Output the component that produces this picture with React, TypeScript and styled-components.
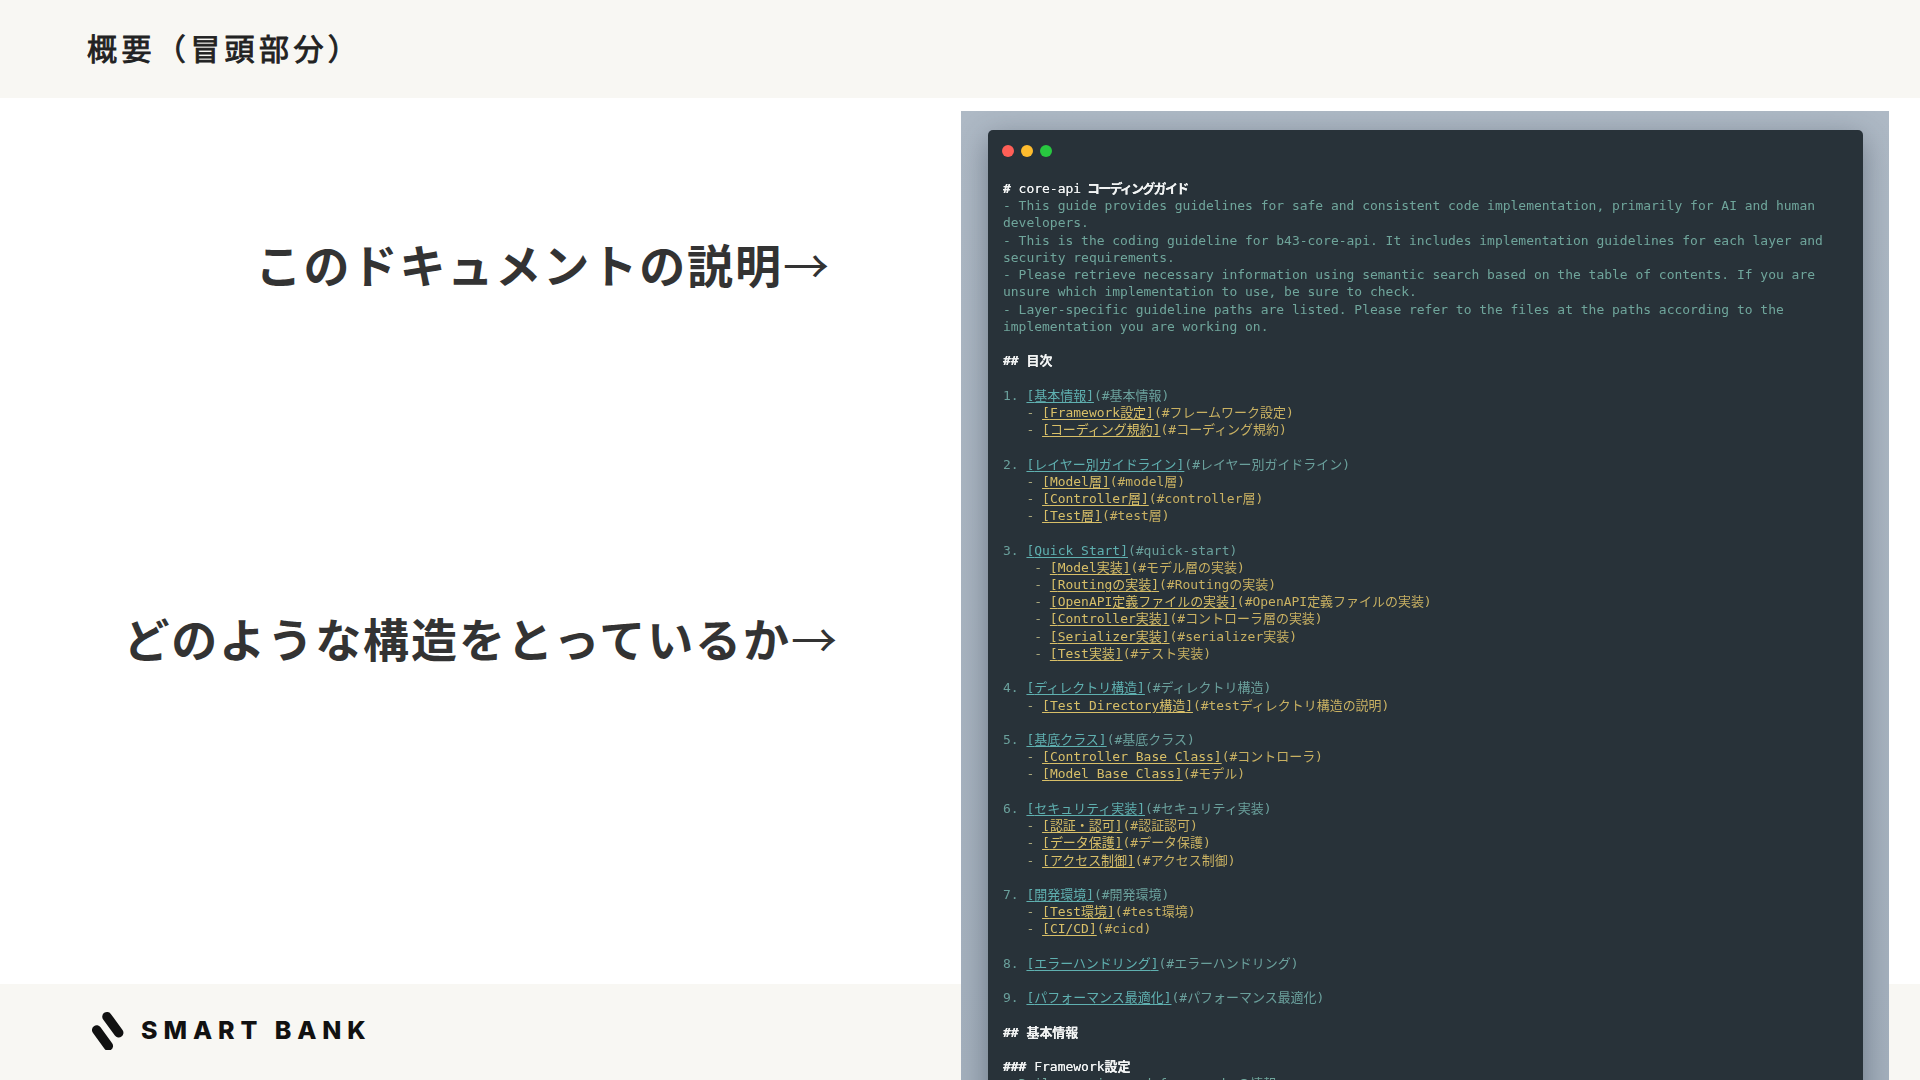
import styled, { createGlobalStyle } from "styled-components";

const GlobalStyle = createGlobalStyle`
  html, body {
    margin: 0;
    padding: 0;
    background: #fff;
    overflow: hidden;
  }
`;

type SubItem = { label: string; anchor: string };
type TocEntry = { label: string; anchor: string; deep?: boolean; items: SubItem[] };

const toc: TocEntry[] = [
  {
    label: "基本情報",
    anchor: "基本情報",
    items: [
      { label: "Framework設定", anchor: "フレームワーク設定" },
      { label: "コーディング規約", anchor: "コーディング規約" },
    ],
  },
  {
    label: "レイヤー別ガイドライン",
    anchor: "レイヤー別ガイドライン",
    items: [
      { label: "Model層", anchor: "model層" },
      { label: "Controller層", anchor: "controller層" },
      { label: "Test層", anchor: "test層" },
    ],
  },
  {
    label: "Quick Start",
    anchor: "quick-start",
    deep: true,
    items: [
      { label: "Model実装", anchor: "モデル層の実装" },
      { label: "Routingの実装", anchor: "Routingの実装" },
      { label: "OpenAPI定義ファイルの実装", anchor: "OpenAPI定義ファイルの実装" },
      { label: "Controller実装", anchor: "コントローラ層の実装" },
      { label: "Serializer実装", anchor: "serializer実装" },
      { label: "Test実装", anchor: "テスト実装" },
    ],
  },
  {
    label: "ディレクトリ構造",
    anchor: "ディレクトリ構造",
    items: [{ label: "Test Directory構造", anchor: "testディレクトリ構造の説明" }],
  },
  {
    label: "基底クラス",
    anchor: "基底クラス",
    items: [
      { label: "Controller Base Class", anchor: "コントローラ" },
      { label: "Model Base Class", anchor: "モデル" },
    ],
  },
  {
    label: "セキュリティ実装",
    anchor: "セキュリティ実装",
    items: [
      { label: "認証・認可", anchor: "認証認可" },
      { label: "データ保護", anchor: "データ保護" },
      { label: "アクセス制御", anchor: "アクセス制御" },
    ],
  },
  {
    label: "開発環境",
    anchor: "開発環境",
    items: [
      { label: "Test環境", anchor: "test環境" },
      { label: "CI/CD", anchor: "cicd" },
    ],
  },
  { label: "エラーハンドリング", anchor: "エラーハンドリング", items: [] },
  { label: "パフォーマンス最適化", anchor: "パフォーマンス最適化", items: [] },
];

const intro = [
  "- This guide provides guidelines for safe and consistent code implementation, primarily for AI and human developers.",
  "- This is the coding guideline for b43-core-api. It includes implementation guidelines for each layer and security requirements.",
  "- Please retrieve necessary information using semantic search based on the table of contents. If you are unsure which implementation to use, be sure to check.",
  "- Layer-specific guideline paths are listed. Please refer to the files at the paths according to the implementation you are working on.",
];

export default function App() {
  return (
    <>
      <GlobalStyle />
      <Slide>
        <Header>
          <Title>概要（冒頭部分）</Title>
        </Header>

        <Notes>
          <Note $inset={0}>
            このドキュメントの説明<Arrow>→</Arrow>
          </Note>
          <Note $inset={-8}>
            どのような構造をとっているか<Arrow>→</Arrow>
          </Note>
        </Notes>

        <Shot>
          <Window>
            <Dots>
              <Dot $color="#ff5f57" />
              <Dot $color="#febc2e" />
              <Dot $color="#28c840" />
            </Dots>
            <Code>
              <Heading>
                <HeadMark>#</HeadMark> core-api <HeadMark $tight>コーディングガイド</HeadMark>
              </Heading>
              {intro.map((line) => (
                <Intro key={line}>{line}</Intro>
              ))}
              <Blank />
              <Heading>
                <HeadMark>## 目次</HeadMark>
              </Heading>
              <Blank />
              {toc.map((entry, index) => (
                <div key={entry.label}>
                  <TocLine>
                    {index + 1}. <TocLink>[{entry.label}]</TocLink>(#{entry.anchor})
                  </TocLine>
                  {entry.items.map((item) => (
                    <SubLine key={item.label}>
                      <Dash>{entry.deep ? "    - " : "   - "}</Dash>
                      <SubLink>[{item.label}]</SubLink>(#{item.anchor})
                    </SubLine>
                  ))}
                  <Blank />
                </div>
              ))}
              <Heading>
                <HeadMark>## 基本情報</HeadMark>
              </Heading>
              <Blank />
              <Heading>
                <HeadMark>###</HeadMark> Framework<HeadMark>設定</HeadMark>
              </Heading>
              <Intro>- Rails version and framework の情報</Intro>
            </Code>
          </Window>
        </Shot>

        <Footer>
          <Mark viewBox="0 0 32 40" aria-hidden="true">
            <path d="M15 6.7 L26.7 22.7" />
            <path d="M4.7 20 L16.3 36" />
          </Mark>
          <Wordmark>SMART BANK</Wordmark>
        </Footer>
      </Slide>
    </>
  );
}

const Slide = styled.div`
  width: 1920px;
  height: 1080px;
  overflow: hidden;
  display: grid;
  grid-template-columns: 961px 928px 31px;
  grid-template-rows: 98px 886px 96px;
  background: #fff;
  font-family: "Noto Sans CJK JP", "Noto Sans", sans-serif;
`;

const Header = styled.header`
  grid-column: 1 / -1;
  grid-row: 1;
  display: flex;
  align-items: center;
  padding: 0 0 5px 87px;
  background: #f8f7f3;
`;

const Title = styled.h1`
  margin: 0;
  font-size: 30px;
  font-weight: 400;
  letter-spacing: 4.4px;
  -webkit-text-stroke: 0.9px #222;
  color: #222;
`;

const Notes = styled.div`
  grid-column: 1;
  grid-row: 2;
  display: flex;
  flex-direction: column;
  align-items: flex-end;
  gap: 302px;
  padding: 129px 132px 0 0;
`;

const Note = styled.p<{ $inset: number }>`
  margin: 0 ${(p) => p.$inset}px 0 0;
  font-size: 46px;
  line-height: 72px;
  font-weight: 700;
  letter-spacing: 1.95px;
  white-space: nowrap;
  color: #333;
`;

const Arrow = styled.span`
  font-weight: 400;
  letter-spacing: 0;
`;

const Shot = styled.section`
  grid-column: 2;
  grid-row: 2 / 4;
  z-index: 1;
  margin-top: 13px;
  padding: 19px 26px 0 27px;
  background: linear-gradient(180deg, #aeb9c5 0%, #a4b0bd 100%);
  overflow: hidden;
`;

const Window = styled.div`
  height: 1100px;
  border-radius: 5px 5px 0 0;
  background: #283239;
  box-shadow: 0 8px 30px rgba(40, 52, 66, 0.45);
`;

const Dots = styled.div`
  display: flex;
  gap: 7px;
  padding: 15px 0 23px 14px;
`;

const Dot = styled.span<{ $color: string }>`
  width: 12px;
  height: 12px;
  border-radius: 50%;
  background: ${(p) => p.$color};
`;

const Code = styled.div`
  width: 846px;
  padding-left: 15px;
  font-family: "DejaVu Sans Mono", "Noto Sans CJK JP", monospace;
  font-size: 12.98px;
  line-height: 17.225px;
  white-space: pre-wrap;
  filter: blur(0.35px);
`;

const Heading = styled.div`
  color: #f1f3f3;
  text-shadow: 0 0 0.5px #f1f3f3;
`;

const HeadMark = styled.span<{ $tight?: boolean }>`
  font-weight: 700;
  letter-spacing: ${(p) => (p.$tight ? "-1.7px" : "0")};
  margin-left: ${(p) => (p.$tight ? "-2px" : "0")};
`;

const Intro = styled.div`
  color: #6fa59b;
`;

const Blank = styled.div`
  height: 17.225px;
`;

const TocLine = styled.div`
  color: #6aa09c;
`;

const TocLink = styled.span`
  color: #5fb0b0;
  text-decoration: underline;
  text-underline-offset: 2px;
`;

const SubLine = styled.div`
  color: #c9b162;
`;

const SubLink = styled.span`
  color: #d8bf68;
  text-decoration: underline;
  text-underline-offset: 2px;
`;

const Dash = styled.span`
  color: #a9a77c;
`;

const Footer = styled.footer`
  grid-column: 1 / -1;
  grid-row: 3;
  display: flex;
  align-items: center;
  gap: 17px;
  padding: 0 0 4px 92px;
  background: #f8f7f3;
`;

const Mark = styled.svg`
  width: 32px;
  height: 40px;
  fill: none;
  stroke: #111;
  stroke-width: 9.5;
  stroke-linecap: round;
`;

const Wordmark = styled.span`
  font-family: Inter, Lato, sans-serif;
  font-size: 25px;
  font-weight: 800;
  letter-spacing: 5.9px;
  white-space: nowrap;
  color: #111;
`;
